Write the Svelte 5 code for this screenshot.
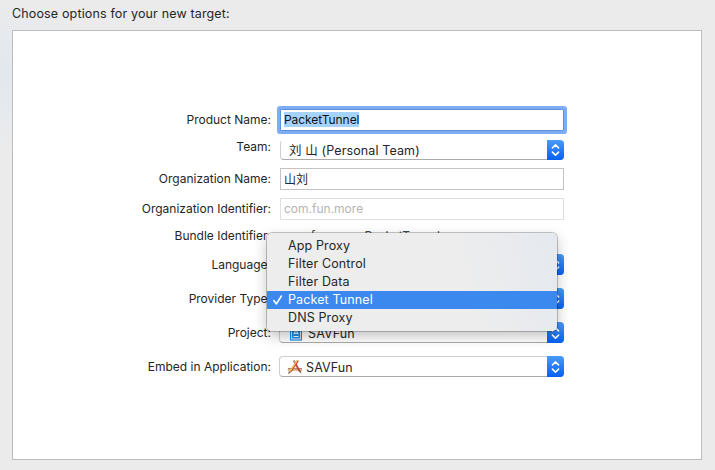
<script>
  const rows = [
    { label: 'Product Name:', kind: 'input', value: 'PacketTunnel', focused: true, cls: 'product' },
    { label: 'Team:', kind: 'select', value: '刘 山 (Personal Team)', cls: 'team' },
    { label: 'Organization Name:', kind: 'input', value: '山刘', cls: 'org' },
    { label: 'Organization Identifier:', kind: 'input', value: 'com.fun.more', cls: 'orgid' },
    { label: 'Bundle Identifier:', kind: 'text', value: 'com.fun.more.PacketTunnel', cls: 'bundle' },
    { label: 'Language:', kind: 'select', value: '', cls: 'language' },
    { label: 'Provider Type:', kind: 'select', value: '', cls: 'provider' },
    { label: 'Project:', kind: 'select', value: 'SAVFun', icon: 'project', cls: 'project' },
    { label: 'Embed in Application:', kind: 'select', value: 'SAVFun', icon: 'app', cls: 'embed' }
  ];
  const options = ['App Proxy', 'Filter Control', 'Filter Data', 'Packet Tunnel', 'DNS Proxy'];
  const selected = 'Packet Tunnel';
</script>

<main>
  <h1>Choose options for your new target:</h1>
  <section class="panel">
    {#each rows as row}
      <div class="row {row.cls}">
        <span class="label">{row.label}</span>
        {#if row.kind === 'input'}
          <div class="input" class:focused={row.focused}><span>{row.value}</span></div>
        {:else if row.kind === 'select'}
          <div class="select">
            {#if row.icon === 'project'}
              <svg class="icon" width="12" height="16" viewBox="0 0 12 16">
                <rect x=".6" y=".6" width="10.8" height="14.4" fill="#fff" stroke="#1688e8" stroke-width="1.2" />
                <rect x="2" y="2" width="8" height="11.5" fill="#168be9" />
                <path d="M3.8 9.4 6 4.2l2.2 5.2M4.4 8.4h3.2M3.4 11.5h5.2" fill="none" stroke="#fff" stroke-width="1" />
              </svg>
            {:else if row.icon === 'app'}
              <svg class="icon" width="16" height="16" viewBox="0 0 16 16">
                <path d="M.8 9.6h14.4v2.3H.8z" fill="#d9b48a" />
                <path d="M1 9.5h14" stroke="#8b664b" stroke-width=".7" />
                <path d="m7.4 2.6 5.5 10.2" stroke="#c3413a" stroke-width="1.8" />
                <path d="m6.6 1.2 1.2 2.2" stroke="#a99a94" stroke-width="2" />
                <path d="M11.3 1.6 3.4 13.2" stroke="#d5322a" stroke-width="1.4" />
                <path d="M10.3 1.4 2.5 12.8" stroke="#e9c250" stroke-width="1.4" />
                <path d="m1.9 12.2-.8 2.7 2.5-1.5z" fill="#685144" />
                <path d="m12 12.4 2.3 2.3-.3-3.3z" fill="#77706c" />
              </svg>
            {/if}
            <span>{row.value}</span>
            <i class="stepper">
              <svg width="17" height="20" viewBox="0 0 17 20">
                <path d="m5.4 7.9 3.1-3 3.1 3M5.4 12.1l3.1 3 3.1-3" fill="none" stroke="#fff" stroke-width="1.5" stroke-linecap="round" stroke-linejoin="round" />
              </svg>
            </i>
          </div>
        {:else}
          <div class="plain">{row.value}</div>
        {/if}
      </div>
    {/each}
  </section>
  <ul class="menu">
    {#each options as option}
      <li class:active={option === selected}>
        <span class="check">
          {#if option === selected}
            <svg width="12" height="12" viewBox="0 0 12 12"><path d="m1.8 6.6 2.6 3.3 5-7.9" fill="none" stroke="#fff" stroke-width="1.6" stroke-linecap="round" stroke-linejoin="round" /></svg>
          {/if}
        </span><span class="name">{option}</span>
      </li>
    {/each}
  </ul>
</main>

<style>
  :global(body) { margin: 0; }
  main {
    position: relative;
    box-sizing: border-box;
    width: 715px;
    height: 470px;
    padding: 4px 13px 0 12px;
    overflow: hidden;
    background: radial-gradient(ellipse 110px 75px at 0 75px, #e3e8ee 0, #e6e9ed 50%, #ebebeb 100%);
    color: #262626;
    font-family: Inter, "Noto Sans CJK SC", sans-serif;
    font-size: 12px;
  }
  h1 { margin: 0; height: 26px; line-height: 20px; font-size: 12.5px; letter-spacing: .15px; font-weight: 400; white-space: nowrap; }
  .panel {
    box-sizing: border-box;
    width: 690px;
    height: 430px;
    padding-top: 78px;
    border: 1px solid #bcbcbc;
    background: #fff;
  }
  .row { display: flex; align-items: flex-start; height: 22px; }
  .label { width: 258px; margin-right: 9px; line-height: 22px; text-align: right; white-space: nowrap; }
  .input {
    box-sizing: border-box;
    display: flex;
    align-items: center;
    width: 284px;
    height: 22px;
    padding: 0 0 1px 3px;
    border: 1px solid #c3c3c3;
    background: #fff;
  }
  .input.focused { border-color: #5b91df; box-shadow: 0 0 0 3px #7dadf3; border-radius: 1px; }
  .input.focused span { background: #a6d3fd; line-height: 15px; color: #101010; letter-spacing: -.06px; }
  .select {
    box-sizing: border-box;
    display: flex;
    align-items: center;
    width: 285px;
    height: 21px;
    margin-left: -1px;
    padding-left: 9px;
    border: 1px solid #cecece;
    border-bottom-color: #aaa;
    border-radius: 4px;
    background: #fff;
    font-size: 12.5px;
    letter-spacing: .12px;
    white-space: nowrap;
  }
  .icon { flex: none; }
  .stepper {
    display: flex;
    align-items: center;
    width: 17px;
    height: 21px;
    margin: 0 -1px 0 auto;
    border-radius: 0 4px 4px 0;
    background: linear-gradient(#4a9bf7, #0560f2);
  }
  .plain { line-height: 22px; padding-left: 3px; color: #444; letter-spacing: -.08px; }
  .team { height: 20px; margin-top: 9px; }
  .team .label { line-height: 14px; }
  .team .select { width: 284px; height: 20px; margin-left: 0; padding-left: 8px; border-top-color: transparent; }
  .team .select span { padding-bottom: 1px; }
  .team .stepper { height: 20px; }
  .org { margin-top: 8px; }
  .org .input span { padding-bottom: 1px; }
  .orgid { margin-top: 8px; }
  .orgid .input { border-color: #dfdfdf; color: #b4b4b4; }
  .bundle { margin-top: 5px; }
  .language { margin-top: 7px; }
  .provider, .project, .embed { margin-top: 12px; }
  .project .icon { margin: 0 6px 0 1px; }
  .project .select span { padding-top: 1px; }
  .embed .icon { margin: 0 3px 0 -2px; }
  .embed .select span { padding-top: 1px; }
  .menu {
    position: absolute;
    left: 267px;
    top: 233px;
    box-sizing: border-box;
    width: 290px;
    height: 98px;
    margin: 0;
    padding: 4px 0;
    list-style: none;
    border-radius: 5px;
    background: linear-gradient(75deg, #ededed 65%, #e5e9ef 100%);
    box-shadow: 0 0 0 1px rgba(0, 0, 0, .22), 0 5px 14px rgba(0, 0, 0, .25);
    font-size: 12.5px;
    letter-spacing: .12px;
  }
  .menu li { display: flex; align-items: center; height: 18px; white-space: nowrap; }
  .menu .active { background: #3b88ef; color: #fff; }
  .name { padding-bottom: 2px; }
  .check { display: flex; width: 16px; padding-left: 5px; }
</style>
